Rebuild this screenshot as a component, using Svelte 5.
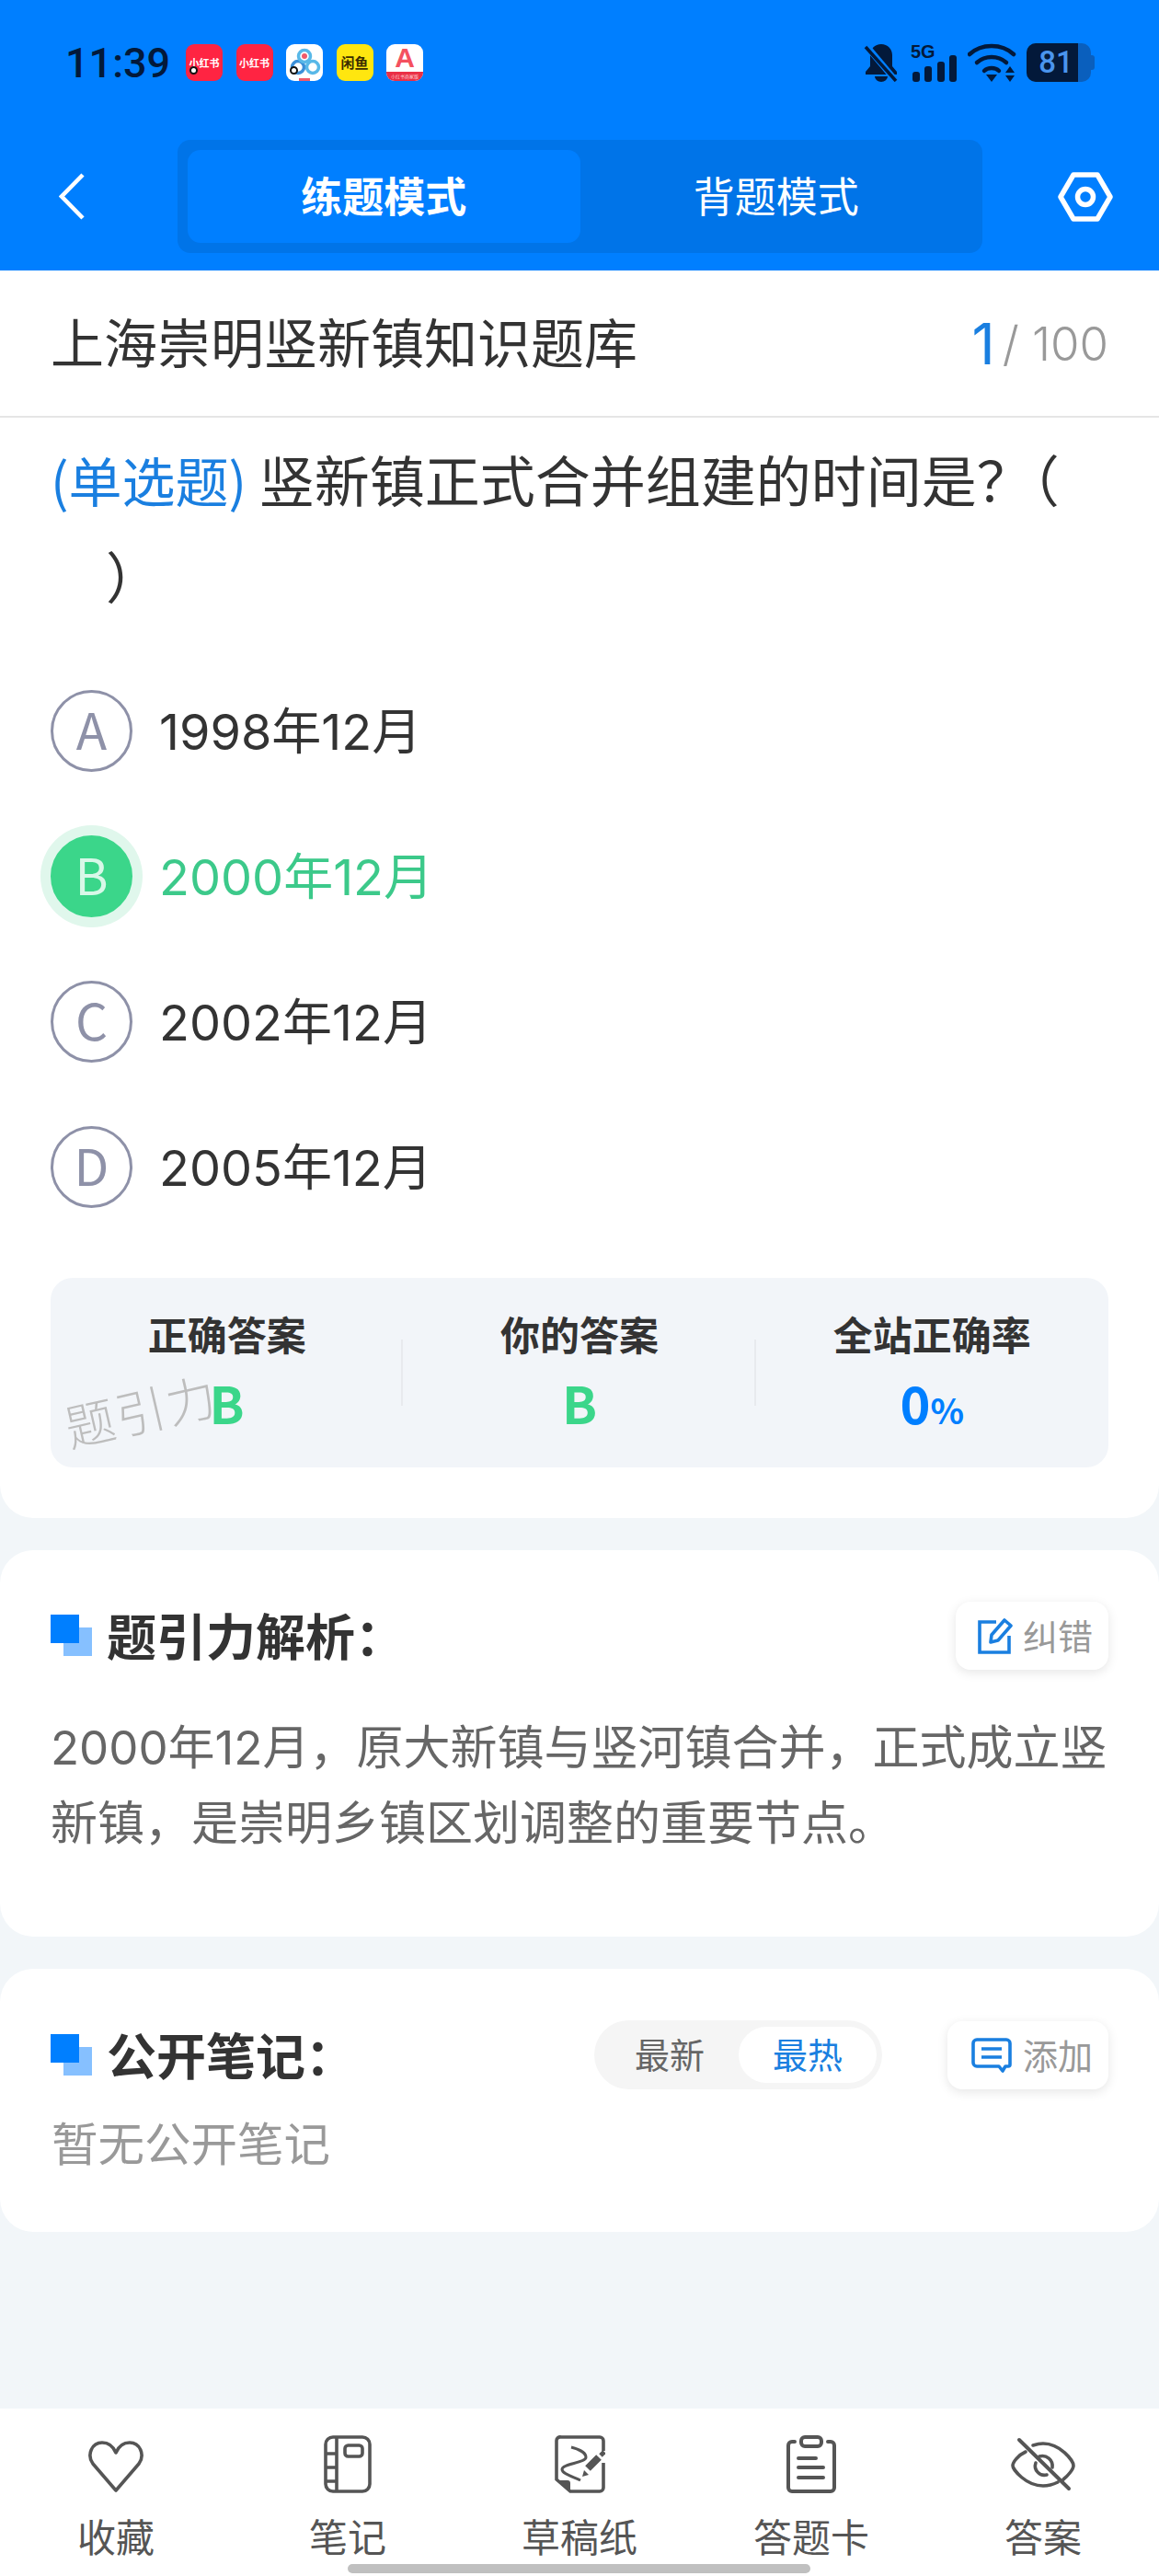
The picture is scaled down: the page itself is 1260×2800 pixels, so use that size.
<script>
  const options = [
    { key: 'A', text: '1998年12月' },
    { key: 'B', text: '2000年12月', right: true },
    { key: 'C', text: '2002年12月' },
    { key: 'D', text: '2005年12月' }
  ];
</script>

<div class="page">
  <header class="header">
    <div class="status">
      <span class="time">11:39</span>
      <div class="apps">
        <span class="app red"><b>小红书</b><i class="dot"></i></span>
        <span class="app red"><b>小红书</b></span>
        <span class="app white">
          <svg viewBox="0 0 40 40" width="40" height="40">
            <circle cx="13" cy="25" r="6.5" fill="none" stroke="#3b8fd8" stroke-width="3.5"/>
            <circle cx="29" cy="25" r="6.5" fill="none" stroke="#58b8e8" stroke-width="3.5"/>
            <circle cx="20" cy="13" r="6.5" fill="none" stroke="#58b8e8" stroke-width="3.5"/>
            <circle cx="20" cy="13" r="3" fill="#f05a6a"/>
            <rect x="14" y="37" width="12" height="3" fill="#f05a6a"/>
          </svg>
          <i class="dot"></i>
        </span>
        <span class="app yellow"><b>闲鱼</b></span>
        <span class="app white alpha"><em>A</em><small>小红书商家版</small></span>
      </div>
      <div class="sys">
        <svg class="bell" viewBox="0 0 38 42" width="38" height="42">
          <path d="M19 1c-7 0-12 5-12 12v12l-5 6v3h34v-3l-5-6V13c0-7-5-12-12-12z" fill="#03193a"/>
          <path d="M12 36a7 6 0 0 0 14 0z" fill="#03193a"/>
          <path d="M3 3l32 38" stroke="#007fff" stroke-width="7"/>
          <path d="M2 4l33 37" stroke="#03193a" stroke-width="3.5"/>
        </svg>
        <div class="signal">
          <span class="net">5G</span>
          <div class="bars"><i style="height:11px"></i><i style="height:17px"></i><i style="height:22px"></i><i style="height:29px"></i></div>
        </div>
        <svg class="wifi" viewBox="0 0 53 42" width="53" height="42">
          <g fill="none" stroke="#03193a" stroke-width="4.5" stroke-linecap="round">
            <path d="M2 12C15 0 37 0 50 12"/>
            <path d="M10 21C19 13 33 13 42 21"/>
            <path d="M18 30C22 26 30 26 34 30"/>
          </g>
          <path d="M20 34h12l-6 8z" fill="#03193a"/>
          <path d="M41 32l5-7 5 7zM41 35h10l-5 7z" fill="#03193a"/>
        </svg>
        <div class="battery"><div class="level">81</div></div>
      </div>
    </div>
    <div class="nav">
      <svg class="back" viewBox="0 0 28 51" width="28" height="51">
        <path d="M26 2L3 25.5 26 49" fill="none" stroke="#fff" stroke-width="4.5"/>
      </svg>
      <div class="segment">
        <div class="seg active">练题模式</div>
        <div class="seg">背题模式</div>
      </div>
      <svg class="hex" viewBox="0 0 60 54" width="60" height="54">
        <path d="M17 3h26l14 24-14 24H17L3 27z" fill="none" stroke="#fff" stroke-width="5.5" stroke-linejoin="round"/>
        <circle cx="30" cy="27" r="8.5" fill="none" stroke="#fff" stroke-width="5.5"/>
      </svg>
    </div>
  </header>

  <section class="card main">
    <div class="title-row">
      <h1>上海崇明竖新镇知识题库</h1>
      <div class="count"><span class="cur">1</span><span class="slash">/</span><span class="total">100</span></div>
    </div>
    <div class="question"><span class="kind">(单选题)</span> 竖新镇正式合并组建的时间是<span class="ask">？</span>（<br>　）</div>
    <div class="options">
      {#each options as o}
        <div class="option" class:right={o.right}>
          <span class="letter">{o.key}</span>
          <span class="opt-text">{o.text}</span>
        </div>
      {/each}
    </div>
    <div class="stats">
      <div class="stat">
        <div class="stat-label">正确答案</div>
        <div class="stat-val green">B</div>
      </div>
      <div class="stat">
        <div class="stat-label">你的答案</div>
        <div class="stat-val green">B</div>
      </div>
      <div class="stat">
        <div class="stat-label">全站正确率</div>
        <div class="stat-val blue">0<small>%</small></div>
      </div>
      <span class="watermark">题引力</span>
    </div>
  </section>

  <section class="card analysis">
    <div class="sec-head">
      <span class="mark"></span>
      <h2>题引力解析：</h2>
      <div class="action fix">
        <svg viewBox="0 0 40 40" width="40" height="40">
          <path d="M20 5H2v33h32V20" fill="none" stroke="#1a7fe0" stroke-width="3.6"/>
          <path d="M14 27l1-8L29 3l7 6-14 16z" fill="none" stroke="#1a7fe0" stroke-width="3.6" stroke-linejoin="round"/>
        </svg>
        <span>纠错</span>
      </div>
    </div>
    <p class="desc">2000年12月，原大新镇与竖河镇合并，正式成立竖<br>新镇，是崇明乡镇区划调整的重要节点。</p>
  </section>

  <section class="card notes">
    <div class="sec-head">
      <span class="mark"></span>
      <h2>公开笔记：</h2>
      <div class="tabs">
        <span class="tab">最新</span>
        <span class="tab on">最热</span>
      </div>
      <div class="action add">
        <svg viewBox="0 0 44 38" width="44" height="38">
          <path d="M6 2h32a4 4 0 0 1 4 4v23a2 2 0 0 1-2 2h-3l-3 5-4-5H6a4 4 0 0 1-4-4V6a4 4 0 0 1 4-4z" fill="none" stroke="#1a7fe0" stroke-width="3.6" stroke-linejoin="round"/>
          <path d="M11 12h22M11 21h22" stroke="#1a7fe0" stroke-width="3.6"/>
        </svg>
        <span>添加</span>
      </div>
    </div>
    <p class="empty">暂无公开笔记</p>
  </section>

  <div class="spacer"></div>

  <nav class="bottom">
    <div class="item">
      <svg viewBox="0 0 64 63" width="64" height="63">
        <path d="M32 60L7 31C0 21 6 8 17 8c7 0 12 4 15 11 3-7 8-11 15-11 11 0 17 13 10 23z" fill="none" stroke="#555" stroke-width="3.6" stroke-linejoin="round"/>
      </svg>
      <span>收藏</span>
    </div>
    <div class="item">
      <svg viewBox="0 0 52 63" width="52" height="63">
        <g fill="none" stroke="#555" stroke-width="3.6">
          <rect x="2" y="2" width="48" height="59" rx="8"/>
          <path d="M14 2v59M2 20h12M2 35h12M2 50h12"/>
          <rect x="23" y="11" width="19" height="12" rx="3.5"/>
        </g>
      </svg>
      <span>笔记</span>
    </div>
    <div class="item">
      <svg viewBox="0 0 55 63" width="55" height="63">
        <g fill="none" stroke="#555" stroke-width="3.6">
          <path d="M53 17V6a4 4 0 0 0-4-4H7a4 4 0 0 0-5 4v42l15 13h32a4 4 0 0 0 4-4V30"/>
          <path d="M18 13c8 2 16 6 16 11 0 6-26 7-26 13 0 5 12 8 20 12" stroke-width="3"/>
        </g>
        <path d="M2 49h12c2 0 3 1 3 3v10z" fill="#555"/>
        <path d="M36 36l12-12" stroke="#555" stroke-width="8"/>
        <path d="M30 45l2-7 5 5z" fill="#555"/>
        <path d="M50 22l4-4" stroke="#555" stroke-width="5"/>
      </svg>
      <span>草稿纸</span>
    </div>
    <div class="item">
      <svg viewBox="0 0 54 63" width="54" height="63">
        <g fill="none" stroke="#555" stroke-width="4" stroke-linecap="round">
          <path d="M9 7H6a4 4 0 0 0-4 4v46a4 4 0 0 0 4 4h42a4 4 0 0 0 4-4V11a4 4 0 0 0-4-4h-3"/>
          <rect x="16" y="2" width="22" height="10" rx="4"/>
          <path d="M13 25h19M13 35h27M13 46h27"/>
        </g>
      </svg>
      <span>答题卡</span>
    </div>
    <div class="item">
      <svg viewBox="0 0 70 63" width="70" height="63">
        <g fill="none" stroke="#555" stroke-width="3.6" stroke-linecap="round">
          <path d="M16 18C7 22 2 30 2 33c0 4 14 22 33 22 6 0 12-2 16-4"/>
          <path d="M24 11c3-1 7-2 11-2 19 0 33 19 33 24 0 4-6 11-11 15"/>
          <path d="M27 30a10 10 0 0 0 12 13"/>
          <path d="M31 23a11 11 0 0 1 14 12" stroke-width="3.6"/>
          <path d="M9 5l54 53" stroke-width="4"/>
        </g>
      </svg>
      <span>答案</span>
    </div>
    <span class="home"></span>
  </nav>
</div>

<style>
  :global(body) {
    margin: 0;
    background: #f2f6f9;
  }

  .page {
    width: 1260px;
    height: 2800px;
    display: flex;
    flex-direction: column;
    font-family: "Noto Sans CJK SC", "Noto Sans", sans-serif;
    color: #333;
    overflow: hidden;
  }

  .header {
    height: 294px;
    background: #007fff;
    flex: none;
  }

  .status {
    height: 136px;
    display: flex;
    align-items: center;
    padding: 0 74px 0 71px;
    color: #03193a;
  }

  .time {
    font-family: Roboto, sans-serif;
    font-size: 45px;
    font-weight: 500;
    width: 131px;
  }

  .apps {
    display: flex;
    gap: 14.5px;
  }

  .app {
    position: relative;
    width: 40px;
    height: 40px;
    border-radius: 9px;
    display: flex;
    align-items: center;
    justify-content: center;
  }

  .app b {
    font-size: 11px;
    line-height: 14px;
    font-weight: 700;
    white-space: nowrap;
  }

  .red { background: #ff2442; color: #fff; }
  .white { background: #fff; }
  .yellow { background: #ffe60f; color: #3a2c00; }
  .yellow b { font-size: 15px; }

  .dot {
    position: absolute;
    left: 4px;
    bottom: 7px;
    width: 5px;
    height: 5px;
    border: 2px solid #111;
    border-radius: 50%;
    background: #fff;
  }

  .alpha {
    align-items: flex-start;
  }

  .alpha em {
    font-family: "Liberation Sans", sans-serif;
    font-size: 30px;
    line-height: 30px;
    font-weight: 700;
    font-style: normal;
    color: #f4515f;
  }

  .alpha small {
    position: absolute;
    left: 0;
    right: 0;
    bottom: 0;
    height: 10px;
    border-radius: 0 0 9px 9px;
    background: #ea2f46;
    color: #ffd0d5;
    font-size: 5px;
    line-height: 10px;
    text-align: center;
    white-space: nowrap;
  }

  .sys {
    margin-left: auto;
    display: flex;
    align-items: center;
  }

  .signal {
    position: relative;
    width: 50px;
    height: 42px;
    margin-left: 13px;
  }

  .net {
    position: absolute;
    left: 0;
    top: 0;
    font-family: "Liberation Sans", sans-serif;
    font-size: 20px;
    font-weight: 700;
    line-height: 18px;
  }

  .bars {
    position: absolute;
    left: 2px;
    right: 0;
    bottom: 0;
    display: flex;
    align-items: flex-end;
    justify-content: space-between;
  }

  .bars i {
    width: 8px;
    border-radius: 3px;
    background: #03193a;
  }

  .wifi {
    margin-left: 12px;
  }

  .battery {
    position: relative;
    width: 70px;
    height: 42px;
    margin-left: 11px;
    border-radius: 10px;
    background: #0a5fbd;
  }

  .battery::after {
    content: "";
    position: absolute;
    right: -4px;
    top: 13px;
    width: 4px;
    height: 16px;
    border-radius: 0 3px 3px 0;
    background: #0a5fbd;
  }

  .level {
    width: 56px;
    height: 42px;
    box-sizing: border-box;
    padding-left: 8px;
    background: #03193a;
    border-radius: 10px 0 0 10px;
    color: #4a95ee;
    font-family: Roboto, sans-serif;
    font-size: 33px;
    font-weight: 500;
    line-height: 42px;
    text-align: center;
  }

  .nav {
    margin-top: 16px;
    height: 123px;
    display: flex;
    align-items: center;
    padding-left: 64px;
  }

  .back { flex: none; }

  .segment {
    margin-left: 101px;
    width: 875px;
    height: 123px;
    box-sizing: border-box;
    padding: 11px;
    display: flex;
    background: #0074e8;
    border-radius: 14px;
  }

  .seg {
    flex: 1;
    border-radius: 14px;
    color: #fff;
    font-size: 45px;
    line-height: 98px;
    text-align: center;
  }

  .seg.active {
    background: #007fff;
    font-weight: 700;
  }

  .hex {
    margin-left: 82px;
    flex: none;
  }

  .card {
    background: #fff;
    flex: none;
  }

  .main {
    height: 1356px;
    border-radius: 0 0 36px 36px;
    position: relative;
    box-sizing: border-box;
  }

  .title-row {
    height: 160px;
    box-sizing: border-box;
    border-bottom: 2px solid #e5e5e5;
    padding: 0 55px 6px 55px;
    display: flex;
    align-items: center;
    justify-content: space-between;
  }

  h1 {
    margin: 0;
    font-size: 58px;
    font-weight: 400;
    color: #333;
  }

  .count {
    display: flex;
    align-items: center;
    margin-top: 6px;
    font-family: Inter, "Noto Sans CJK SC", sans-serif;
    color: #999;
    font-weight: 300;
  }

  .cur {
    color: #1a7fe0;
    font-size: 62px;
    font-weight: 400;
  }

  .slash {
    font-size: 52px;
    margin: 0 14px 0 8px;
  }

  .total {
    font-size: 51px;
  }

  .question {
    padding: 14px 40px 0 55px;
    font-size: 60px;
    line-height: 104px;
    color: #333;
    white-space: nowrap;
  }

  .kind {
    color: #1a7fe0;
    font-size: 58px;
  }

  .ask {
    letter-spacing: -30px;
  }

  .options {
    margin-top: 38px;
    padding-left: 55px;
  }

  .option {
    height: 158px;
    display: flex;
    align-items: center;
    font-size: 54px;
    color: #333;
  }

  .letter {
    flex: none;
    width: 89px;
    height: 89px;
    box-sizing: border-box;
    border: 3px solid #8e91a8;
    border-radius: 50%;
    color: #8e91a8;
    font-size: 55px;
    line-height: 76px;
    text-align: center;
  }

  .opt-text {
    margin: -6px 0 0 29px;
    font-family: Inter, "Noto Sans CJK SC", sans-serif;
  }

  .option.right {
    color: #3cc98a;
  }

  .option.right .letter {
    background: #3bd68a;
    border-color: #3bd68a;
    color: #d8f8e8;
    box-shadow: 0 0 0 11px #e0f7ec;
  }

  .stats {
    position: absolute;
    left: 55px;
    right: 55px;
    top: 1095px;
    height: 206px;
    display: flex;
    background: #f2f5f9;
    border-radius: 24px;
  }

  .stat {
    flex: 1;
    position: relative;
    text-align: center;
  }

  .stat + .stat::before {
    content: "";
    position: absolute;
    left: -2px;
    top: 67px;
    height: 72px;
    width: 2px;
    background: #e8eaee;
  }

  .stat-label {
    margin-top: 34px;
    font-size: 43px;
    line-height: 52px;
    font-weight: 700;
    color: #333;
  }

  .stat-val {
    margin-top: 19px;
    font-size: 56px;
    line-height: 60px;
    font-weight: 700;
  }

  .stat-val small {
    font-size: 38px;
  }

  .green { color: #3bd68a; }
  .blue { color: #007fff; }

  .watermark {
    position: absolute;
    left: 14px;
    top: 113px;
    font-size: 54px;
    font-weight: 300;
    line-height: 60px;
    letter-spacing: 2px;
    color: #bdbdbd;
    transform: rotate(-13deg);
  }

  .analysis {
    margin-top: 35px;
    height: 420px;
    border-radius: 36px;
    padding: 55px 55px 0 55px;
    box-sizing: border-box;
  }

  .notes {
    margin-top: 35px;
    height: 286px;
    border-radius: 36px;
    padding: 56px 55px 0 55px;
    box-sizing: border-box;
  }

  .sec-head {
    display: flex;
    align-items: center;
    height: 75px;
  }

  .mark {
    position: relative;
    flex: none;
    width: 45px;
    height: 45px;
  }

  .mark::before,
  .mark::after {
    content: "";
    position: absolute;
    width: 31px;
    height: 31px;
  }

  .mark::before {
    right: 0;
    bottom: 0;
    background: #86c0ff;
  }

  .mark::after {
    left: 0;
    top: 0;
    background: #007fff;
  }

  h2 {
    margin: -3px 0 0 16px;
    font-size: 54px;
    font-weight: 700;
    color: #333;
  }

  .action {
    margin-left: auto;
    height: 74px;
    box-sizing: border-box;
    display: flex;
    align-items: center;
    background: #fff;
    border-radius: 16px;
    box-shadow: 0 3px 12px rgba(0, 0, 0, 0.1);
    color: #999;
    font-size: 38px;
  }

  .action span {
    margin-top: -3px;
  }

  .fix {
    width: 166px;
    padding-left: 24px;
    gap: 9px;
  }

  .add {
    width: 175px;
    padding-left: 26px;
    gap: 12px;
  }

  .tabs {
    margin-left: auto;
    width: 313px;
    height: 75px;
    box-sizing: border-box;
    padding: 7px 6px 7px 0;
    display: flex;
    justify-content: flex-end;
    background: #f5f5f5;
    border-radius: 38px;
    font-size: 38px;
  }

  .tabs + .action {
    margin-left: 71px;
  }

  .tab {
    width: 150px;
    line-height: 57px;
    text-align: center;
    color: #666;
    border-radius: 31px;
  }

  .tab.on {
    color: #1a7fe0;
    background: #fff;
  }

  .desc {
    margin: 44px 0 0;
    font-size: 51px;
    line-height: 82px;
    color: #666;
    white-space: nowrap;
    font-family: Inter, "Noto Sans CJK SC", sans-serif;
  }

  .empty {
    margin: 20px 0 0 1px;
    font-size: 50.5px;
    line-height: 72px;
    color: #999;
  }

  .spacer {
    flex: 1;
  }

  .bottom {
    position: relative;
    flex: none;
    height: 182px;
    display: grid;
    grid-template-columns: repeat(5, 1fr);
    background: #fff;
    padding-top: 29px;
    box-sizing: border-box;
  }

  .item {
    display: flex;
    flex-direction: column;
    align-items: center;
    color: #555;
    font-size: 42px;
    line-height: 56px;
  }

  .item span {
    margin-top: 18px;
  }

  .home {
    position: absolute;
    left: 378px;
    bottom: 3px;
    width: 503px;
    height: 10px;
    border-radius: 5px;
    background: #c0c0c0;
  }
</style>
